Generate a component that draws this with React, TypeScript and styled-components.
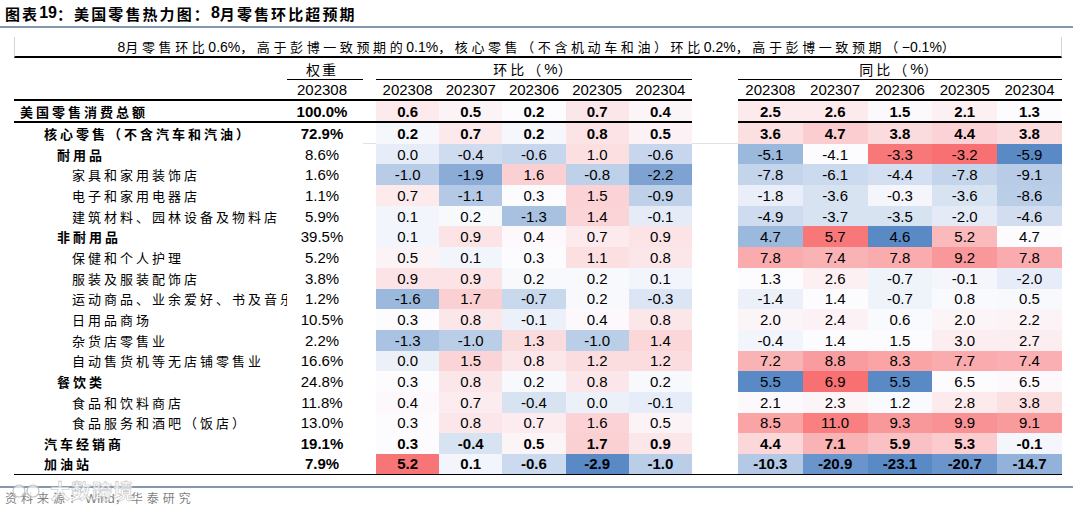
import styled, { createGlobalStyle } from "styled-components";

const GlobalStyle = createGlobalStyle`
  html, body {
    margin: 0;
    padding: 0;
    background: #ffffff;
  }
  body {
    font-family: "Liberation Sans", "Noto Sans CJK SC", sans-serif;
    color: #000000;
  }
`;

const COLS = "273px 76px 13px repeat(5, 63.2px) 46px repeat(5, 64.8px)";

type Row = {
  name: string;
  lvl: number;
  bold?: boolean;
  strong?: boolean;
  w: string;
  mom: number[];
  yoy: number[];
  mt: number[];
  yt: number[];
};

const rows: Row[] = [
  { name: "美国零售消费总额", lvl: 0, bold: true, strong: true, w: "100.0%",
    mom: [0.6, 0.5, 0.2, 0.7, 0.4], yoy: [2.5, 2.6, 1.5, 2.1, 1.3],
    mt: [0.12, 0.06, 0.0, 0.15, 0.05], yt: [0.12, 0.12, 0.02, 0.08, 0.0] },
  { name: "核心零售（不含汽车和汽油）", lvl: 1, bold: true, strong: true, w: "72.9%",
    mom: [0.2, 0.7, 0.2, 0.8, 0.5], yoy: [3.6, 4.7, 3.8, 4.4, 3.8],
    mt: [-0.04, 0.13, -0.04, 0.17, 0.07], yt: [0.2, 0.32, 0.22, 0.28, 0.22] },
  { name: "耐用品", lvl: 2, bold: true, w: "8.6%",
    mom: [0.0, -0.4, -0.6, 1.0, -0.6], yoy: [-5.1, -4.1, -3.3, -3.2, -5.9],
    mt: [-0.13, -0.28, -0.33, 0.2, -0.33], yt: [-0.6, 0.0, 0.9, 0.95, -1.0] },
  { name: "家具和家用装饰店", lvl: 3, w: "1.6%",
    mom: [-1.0, -1.9, 1.6, -0.8, -2.2], yoy: [-7.8, -6.1, -4.4, -7.8, -9.1],
    mt: [-0.42, -0.7, 0.3, -0.38, -0.78], yt: [-0.35, -0.3, -0.25, -0.35, -0.42] },
  { name: "电子和家用电器店", lvl: 3, w: "1.1%",
    mom: [0.7, -1.1, 0.3, 1.5, -0.9], yoy: [-1.8, -3.6, -0.3, -3.6, -8.6],
    mt: [0.12, -0.45, 0.0, 0.28, -0.38], yt: [-0.12, -0.22, -0.05, -0.22, -0.4] },
  { name: "建筑材料、园林设备及物料店", lvl: 3, w: "5.9%",
    mom: [0.1, 0.2, -1.3, 1.4, -0.1], yoy: [-4.9, -3.7, -3.5, -2.0, -4.6],
    mt: [-0.06, -0.03, -0.52, 0.27, -0.14], yt: [-0.28, -0.22, -0.22, -0.15, -0.26] },
  { name: "非耐用品", lvl: 2, bold: true, w: "39.5%",
    mom: [0.1, 0.9, 0.4, 0.7, 0.9], yoy: [4.7, 5.7, 4.6, 5.2, 4.7],
    mt: [-0.06, 0.17, 0.03, 0.12, 0.17], yt: [-0.6, 0.9, -1.0, 0.45, 0.0] },
  { name: "保健和个人护理", lvl: 3, w: "5.2%",
    mom: [0.5, 0.1, 0.3, 1.1, 0.8], yoy: [7.8, 7.4, 7.8, 9.2, 7.8],
    mt: [0.06, -0.06, 0.0, 0.2, 0.14], yt: [0.55, 0.5, 0.55, 0.68, 0.55] },
  { name: "服装及服装配饰店", lvl: 3, w: "3.8%",
    mom: [0.9, 0.9, 0.2, 0.2, 0.1], yoy: [1.3, 2.6, -0.7, -0.1, -2.0],
    mt: [0.17, 0.17, -0.03, -0.03, -0.06], yt: [0.0, 0.08, -0.08, -0.05, -0.13] },
  { name: "运动商品、业余爱好、书及音乐店", lvl: 3, w: "1.2%",
    mom: [-1.6, 1.7, -0.7, 0.2, -0.3], yoy: [-1.4, 1.4, -0.7, 0.8, 0.5],
    mt: [-0.6, 0.3, -0.32, -0.03, -0.2], yt: [-0.1, 0.0, -0.08, -0.02, -0.03] },
  { name: "日用品商场", lvl: 3, w: "10.5%",
    mom: [0.3, 0.8, -0.1, 0.4, 0.8], yoy: [2.0, 2.4, 0.6, 2.0, 2.2],
    mt: [0.0, 0.14, -0.1, 0.03, 0.14], yt: [0.05, 0.07, -0.02, 0.05, 0.06] },
  { name: "杂货店零售业", lvl: 3, w: "2.2%",
    mom: [-1.3, -1.0, 1.3, -1.0, 1.4], yoy: [-0.4, 1.4, 1.5, 3.0, 2.7],
    mt: [-0.5, -0.4, 0.22, -0.4, 0.25], yt: [-0.06, 0.0, 0.01, 0.1, 0.1] },
  { name: "自动售货机等无店铺零售业", lvl: 3, w: "16.6%",
    mom: [0.0, 1.5, 0.8, 1.2, 1.2], yoy: [7.2, 8.8, 8.3, 7.7, 7.4],
    mt: [-0.1, 0.27, 0.14, 0.21, 0.21], yt: [0.5, 0.65, 0.6, 0.55, 0.52] },
  { name: "餐饮类", lvl: 2, bold: true, w: "24.8%",
    mom: [0.3, 0.8, 0.2, 0.8, 0.2], yoy: [5.5, 6.9, 5.5, 6.5, 6.5],
    mt: [0.0, 0.14, -0.03, 0.14, -0.03], yt: [-1.0, 0.95, -1.0, 0.0, 0.03] },
  { name: "食品和饮料商店", lvl: 3, w: "11.8%",
    mom: [0.4, 0.7, -0.4, 0.0, -0.1], yoy: [2.1, 2.3, 1.2, 2.8, 3.8],
    mt: [0.03, 0.11, -0.22, -0.1, -0.13], yt: [0.02, 0.05, -0.02, 0.12, 0.2] },
  { name: "食品服务和酒吧（饭店）", lvl: 3, w: "13.0%",
    mom: [0.3, 0.8, 0.7, 1.6, 0.5], yoy: [8.5, 11.0, 9.3, 9.9, 9.1],
    mt: [0.0, 0.14, 0.11, 0.28, 0.06], yt: [0.6, 0.85, 0.68, 0.72, 0.66] },
  { name: "汽车经销商", lvl: 1, bold: true, strong: true, w: "19.1%",
    mom: [0.3, -0.4, 0.5, 1.7, 0.9], yoy: [4.4, 7.1, 5.9, 5.3, -0.1],
    mt: [0.0, -0.22, 0.05, 0.3, 0.15], yt: [0.25, 0.5, 0.4, 0.33, -0.05] },
  { name: "加油站", lvl: 1, bold: true, strong: true, w: "7.9%",
    mom: [5.2, 0.1, -0.6, -2.9, -1.0], yoy: [-10.3, -20.9, -23.1, -20.7, -14.7],
    mt: [0.92, -0.06, -0.3, -1.0, -0.4], yt: [-0.45, -0.9, -1.0, -0.9, -0.65] },
];

const months = ["202308", "202307", "202306", "202305", "202304"];
const indent = [6, 30, 43, 58];

// excel style 3-colour scale: blue - white - red
function heat(t: number) {
  const white = [252, 252, 255];
  const end = t >= 0 ? [248, 105, 107] : [90, 138, 198];
  const k = Math.min(1, Math.abs(t));
  const c = white.map((w, i) => Math.round(w + (end[i] - w) * k));
  return `rgb(${c[0]}, ${c[1]}, ${c[2]})`;
}

const Han = styled.span<{ $size: number; $gap: number }>`
  font-family: "Noto Sans CJK SC", sans-serif;
  font-size: ${(p) => p.$size}px;
  letter-spacing: ${(p) => p.$gap}px;
`;

function Mixed({ text, size, gap }: { text: string; size: number; gap: number }) {
  const parts = text.split(/([\u2E80-\u9FFF\u3000-\u303F\uFF00-\uFFEF]+)/);
  return (
    <>
      {parts.map((p, i) =>
        i % 2 ? (
          <Han key={i} $size={size} $gap={gap}>
            {p}
          </Han>
        ) : (
          p
        )
      )}
    </>
  );
}

const Page = styled.div`
  position: relative;
  width: 1080px;
  height: 512px;
  overflow: hidden;
  display: flex;
  flex-direction: column;
`;

const TitleBar = styled.div`
  height: 26px;
  margin-right: 7px;
  padding-left: 5px;
  border-bottom: 2px solid #8497b0;
  display: flex;
  align-items: center;
  font-size: 16px;
  font-weight: 700;
  white-space: nowrap;
`;

const Table = styled.div`
  width: 1048px;
  margin: 9px 0 0 14px;
  display: flex;
  flex-direction: column;
`;

const Subtitle = styled.div`
  height: 19px;
  border-left: 1px solid #d4d4d4;
  border-right: 1px solid #d4d4d4;
  border-bottom: 2px solid #000;
  display: flex;
  align-items: center;
  justify-content: center;
  font-size: 14px;
  white-space: nowrap;
`;

const Line = styled.div<{ $h: number }>`
  display: grid;
  grid-template-columns: ${COLS};
  height: ${(p) => p.$h}px;
`;

const Cell = styled.div<{ $rule?: number; $bold?: boolean; $span?: number }>`
  box-sizing: border-box;
  display: flex;
  align-items: center;
  justify-content: center;
  overflow: hidden;
  white-space: nowrap;
  font-size: 15px;
  font-weight: ${(p) => (p.$bold ? 700 : 400)};
  border-bottom: ${(p) => (p.$rule ? `${p.$rule}px solid #000` : "none")};
  grid-column: ${(p) => (p.$span ? `span ${p.$span}` : "auto")};
`;

const WeightCell = styled(Cell)`
  padding-right: 6px;
`;

const Gap = styled.div<{ $rule?: number; $soft?: boolean }>`
  box-sizing: border-box;
  border-bottom: ${(p) =>
    p.$rule ? `${p.$rule}px solid #000` : p.$soft ? "1px solid #e2e2e2" : "none"};
`;

const Label = styled(Cell)<{ $lvl: number }>`
  justify-content: flex-start;
  padding-left: ${(p) => indent[p.$lvl]}px;
`;

const Footer = styled.div`
  margin: 11px 7px 0 0;
  border-top: 2px solid #8497b0;
  padding: 1px 0 0 5px;
  color: #7f7f7f;
  font-size: 13px;
  white-space: nowrap;
`;

const Watermark = styled.div`
  position: absolute;
  left: 10px;
  top: 476px;
  display: flex;
  align-items: center;
  gap: 6px;
  opacity: 0.85;
`;

const MarkText = styled.span`
  font-family: "Noto Sans CJK SC", sans-serif;
  font-size: 20px;
  font-weight: 700;
  letter-spacing: 1px;
  color: rgba(255, 255, 255, 0.85);
  -webkit-text-stroke: 0.6px #b8b8b8;
`;

function HeatRow({ r, last }: { r: Row; last: boolean }) {
  const rule = r.lvl === 0 ? 2 : last ? 1 : 0;
  const soft = r.w === "72.9%";
  return (
    <Line $h={r.lvl === 0 ? 22 : 20.7}>
      <Label $lvl={r.lvl} $rule={rule} $bold={r.bold}>
        <Mixed text={r.name} size={13} gap={3} />
      </Label>
      <WeightCell $rule={rule} $bold={r.strong}>
        {r.w}
      </WeightCell>
      <Gap $rule={rule} $soft={soft} />
      {r.mom.map((v, i) => (
        <Cell key={i} $rule={rule} $bold={r.strong} style={{ background: heat(r.mt[i]) }}>
          {v.toFixed(1)}
        </Cell>
      ))}
      <Gap $rule={last ? 1 : 0} $soft={soft} />
      {r.yoy.map((v, i) => (
        <Cell key={i} $rule={rule} $bold={r.strong} style={{ background: heat(r.yt[i]) }}>
          {v.toFixed(1)}
        </Cell>
      ))}
    </Line>
  );
}

export default function App() {
  return (
    <Page>
      <GlobalStyle />
      <TitleBar>
        <Mixed text="图表19：美国零售热力图：8 月零售环比超预期" size={15} gap={2.1} />
      </TitleBar>
      <Table>
        <Subtitle>
          <Mixed
            text="8月零售环比0.6%，高于彭博一致预期的0.1%，核心零售（不含机动车和油）环比0.2%，高于彭博一致预期（−0.1%）"
            size={13}
            gap={3.6}
          />
        </Subtitle>
        <Line $h={22}>
          <Cell />
          <WeightCell $rule={1}>
            <Mixed text="权重" size={14} gap={2} />
          </WeightCell>
          <Gap />
          <Cell $span={5} $rule={1}>
            <Mixed text="环比（%）" size={14} gap={3} />
          </Cell>
          <Gap />
          <Cell $span={5} $rule={1}>
            <Mixed text="同比（%）" size={14} gap={3} />
          </Cell>
        </Line>
        <Line $h={21}>
          <Cell $rule={2} />
          <WeightCell $rule={2}>202308</WeightCell>
          <Gap $rule={2} />
          {months.map((m) => (
            <Cell key={m} $rule={2}>
              {m}
            </Cell>
          ))}
          <Gap />
          {months.map((m) => (
            <Cell key={m} $rule={2}>
              {m}
            </Cell>
          ))}
        </Line>
        {rows.map((r, i) => (
          <HeatRow key={r.name} r={r} last={i === rows.length - 1} />
        ))}
      </Table>
      <Footer>
        <Mixed text="资料来源：Wind，华泰研究" size={12} gap={4} />
      </Footer>
      <Watermark>
        <svg width="34" height="20" viewBox="0 0 34 20">
          <g fill="rgba(255,255,255,0.8)" stroke="#b8b8b8" strokeWidth="1.2">
            <circle cx="9" cy="10" r="6" />
            <circle cx="23" cy="10" r="6" />
          </g>
        </svg>
        <MarkText>大数跨境</MarkText>
      </Watermark>
    </Page>
  );
}
